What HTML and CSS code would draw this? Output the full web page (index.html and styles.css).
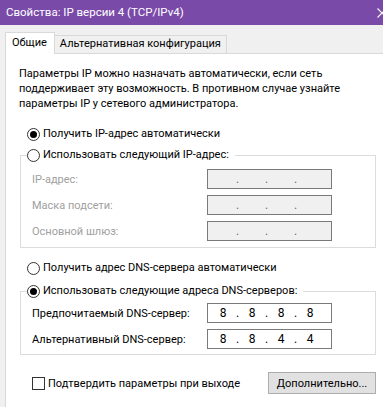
FILE: index.html
```html
<!DOCTYPE html>
<html lang="ru">
<head>
<meta charset="utf-8">
<link rel="stylesheet" href="styles.css">
</head>
<body>
<div class="window">
  <div class="titlebar">
    <span class="title">Свойства: IP версии 4 (TCP/IPv4)</span>
    <svg class="close" width="10" height="10" viewBox="0 0 10 10"><path d="M0.5 0.5 L9.5 9.5 M9.5 0.5 L0.5 9.5" stroke="#fff" stroke-width="1.1" fill="none"/></svg>
  </div>
  <div class="body">
    <div class="tabs">
      <div class="tab active">Общие</div>
      <div class="tab">Альтернативная конфигурация</div>
    </div>
    <div class="panel">
      <p class="intro">Параметры IP можно назначать автоматически, если сеть<br>поддерживает эту возможность. В противном случае узнайте<br>параметры IP у сетевого администратора.</p>

      <label class="option first"><span class="radio checked"></span>Получить IP-адрес автоматически</label>
      <fieldset class="group">
        <legend><label class="option"><span class="radio"></span>Использовать следующий IP-адрес:</label></legend>
        <div class="row disabled first-row"><span class="lbl">IP-адрес:</span><span class="ip"><span class="seg"></span><span class="dot">.</span><span class="seg"></span><span class="dot">.</span><span class="seg"></span><span class="dot">.</span><span class="seg"></span></span></div>
        <div class="row disabled"><span class="lbl">Маска подсети:</span><span class="ip"><span class="seg"></span><span class="dot">.</span><span class="seg"></span><span class="dot">.</span><span class="seg"></span><span class="dot">.</span><span class="seg"></span></span></div>
        <div class="row disabled"><span class="lbl">Основной шлюз:</span><span class="ip"><span class="seg"></span><span class="dot">.</span><span class="seg"></span><span class="dot">.</span><span class="seg"></span><span class="dot">.</span><span class="seg"></span></span></div>
      </fieldset>

      <label class="option dns-first"><span class="radio"></span>Получить адрес DNS-сервера автоматически</label>
      <fieldset class="group dns">
        <legend><label class="option"><span class="radio checked"></span>Использовать следующие адреса DNS-серверов:</label></legend>
        <div class="row first-row"><span class="lbl">Предпочитаемый DNS-сервер:</span><span class="ip"><span class="seg">8</span><span class="dot">.</span><span class="seg">8</span><span class="dot">.</span><span class="seg">8</span><span class="dot">.</span><span class="seg">8</span></span></div>
        <div class="row"><span class="lbl">Альтернативный DNS-сервер:</span><span class="ip"><span class="seg">8</span><span class="dot">.</span><span class="seg">8</span><span class="dot">.</span><span class="seg">4</span><span class="dot">.</span><span class="seg">4</span></span></div>
      </fieldset>

      <div class="footer">
        <label class="check"><span class="box"></span>Подтвердить параметры при выходе</label>
        <button class="btn">Дополнительно...</button>
      </div>
    </div>
  </div>
</div>
</body>
</html>
```
FILE: styles.css
```css
* { box-sizing: border-box; }
html, body { margin: 0; padding: 0; }
body {
  width: 383px;
  height: 407px;
  overflow: hidden;
  background: #f0f0f0;
  font-family: "Segoe UI", Roboto, "Noto Sans", sans-serif;
  font-size: 11px;
  color: #000;
}
.window { width: 400px; height: 407px; display: flex; flex-direction: column; }
.titlebar {
  flex: none;
  height: 25px;
  background: #7a4aa9;
  color: #fff;
  display: flex;
  align-items: center;
  justify-content: space-between;
  padding: 0 13px 1px 6px;
  font-size: 11.5px;
}
.close { display: block; margin-top: 1px; }
.body { flex: 1; min-height: 0; padding: 7px 0 0 5px; display: flex; flex-direction: column; }
.tabs { flex: none; display: flex; align-items: flex-end; height: 21px; position: relative; z-index: 1; }
.tab {
  height: 18px;
  line-height: 16px;
  padding: 0 5px;
  background: #f0f0f0;
  border: 1px solid #d9d9d9;
  border-bottom: none;
  border-left: none;
}
.tab.active {
  height: 22px;
  line-height: 19px;
  background: #fff;
  border-left: 1px solid #d9d9d9;
  padding: 0 7px 0 6px;
  margin-bottom: -1px;
}
.panel {
  flex: 1;
  min-height: 0;
  background: #fff;
  border: 1px solid #d9d9d9;
  border-bottom: none;
  padding: 12px 0 0 13px;
}
.intro { margin: 0; line-height: 15px; white-space: nowrap; }
.option { display: flex; align-items: center; height: 16px; line-height: 16px; white-space: nowrap; }
.option.first { margin: 15px 0 0 8px; }
.radio {
  width: 13px; height: 13px;
  border: 1px solid #333;
  border-radius: 50%;
  background: #fff;
  margin-right: 3px;
  display: flex;
  align-items: center;
  justify-content: center;
}
.radio.checked::after {
  content: "";
  width: 7px; height: 7px;
  border-radius: 50%;
  background: #000;
}
.group {
  margin: 5px 0 0 1px;
  width: 356px;
  border: 1px solid #dcdcdc;
  padding: 0 0 6px 0;
}
.group legend { padding: 0 6px 0 0; margin-left: 6px; }
.row { display: flex; align-items: center; height: 20px; margin: 6px 0 0 11px; }
.lbl { width: 175px; }
.row.disabled .lbl { color: #a0a0a0; }
.ip {
  width: 125px; height: 20px;
  border: 1px solid #7a7a7a;
  background: #fff;
  display: flex;
  align-items: center;
  padding-left: 4px;
  font-size: 12px;
}
.row.disabled .ip { background: #f0f0f0; color: #6d6d6d; }
.seg { width: 22px; text-align: center; }
.dot { width: 7px; text-align: center; }
.option.dns-first { margin: 12px 0 0 8px; }
.group.dns { margin-top: 7px; padding-bottom: 5px; }
.group.dns .first-row { margin-top: 4px; }
.footer { display: flex; align-items: center; justify-content: space-between; width: 356px; margin: 17px 0 0 1px; }
.check { display: flex; align-items: center; margin-left: 12px; }
.box { width: 13px; height: 13px; border: 1px solid #333; background: #fff; margin-right: 3px; }
.btn {
  font: inherit;
  width: 108px; height: 22px;
  background: #e1e1e1;
  border: 1px solid #adadad;
  padding: 0;
  color: #000;
}
```
